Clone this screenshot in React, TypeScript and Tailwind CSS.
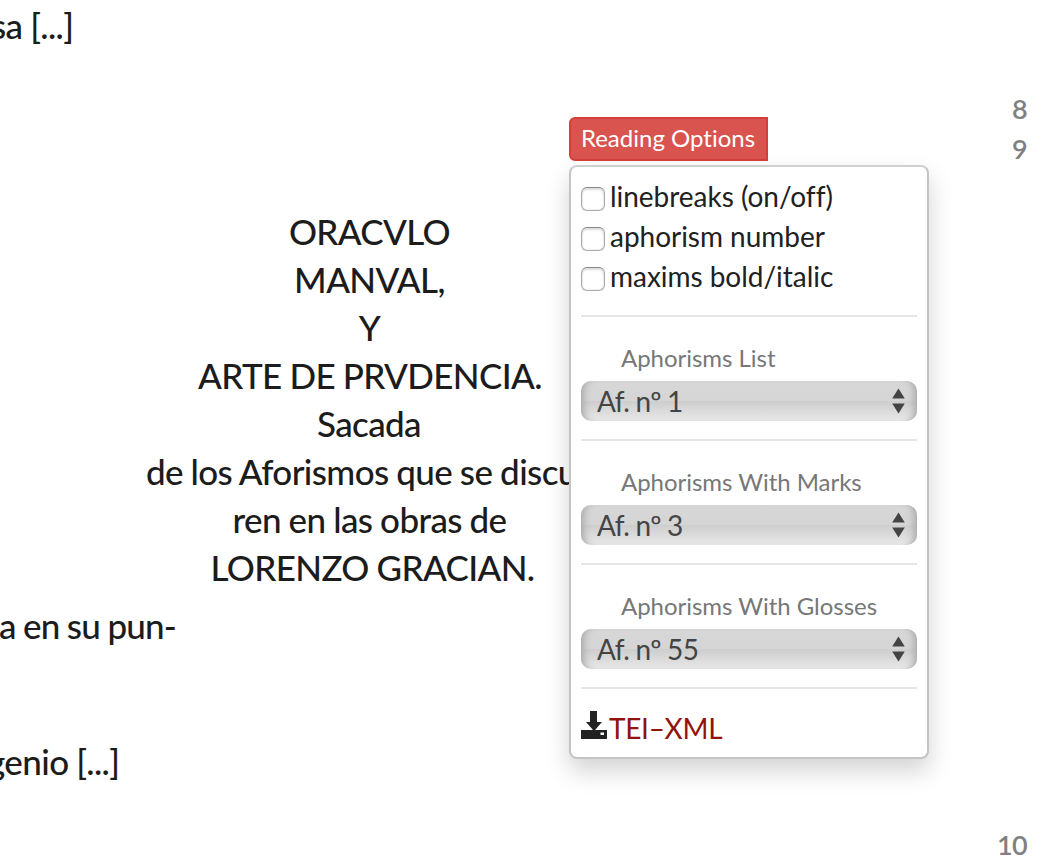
import React from "react";

const titleLines = [
  { text: "ORACVLO", shift: "-ml-px" },
  { text: "MANVAL,", shift: "-ml-px" },
  { text: "Y", shift: "-ml-px" },
  { text: "ARTE DE PRVDENCIA.", shift: "" },
  { text: "Sacada", shift: "-ml-[2px]" },
  { text: "de los Aforismos que se discu-", shift: "-ml-[5px]" },
  { text: "ren en las obras de", shift: "-ml-px" },
  { text: "LORENZO GRACIAN.", shift: "ml-[5px]" },
];

function Check({ label }: { label: string }) {
  return (
    <label className="flex h-10 items-center text-[28px] tracking-[-0.03px] text-[#212121]">
      <span className="mt-1 mr-[5px] size-6 shrink-0 rounded-[6px] border border-[#aaa] border-t-[#888] bg-white shadow-[inset_0_2px_2px_#ddd,inset_0_0_2px_#ccc]" />
      <span className="-mt-[2px] whitespace-nowrap">{label}</span>
    </label>
  );
}

function Picker({ title, value }: { title: string; value: string }) {
  return (
    <section className="h-[124px] border-t-2 border-[#e5e5e5] pt-[22px]">
      <h3 className="h-[42px] pl-10 text-[24px] leading-[38px] tracking-[-0.03px] text-[#777]">{title}</h3>
      <div className="flex h-10 items-center justify-between rounded-[10px] bg-[linear-gradient(#d7d7d7_0%,#d5d5d5_50%,#cecece_51%,#e8e8e8_100%)] pr-3 pl-4 text-[28px] leading-[38px] tracking-[-0.6px] text-[#444] [word-spacing:-0.4px] shadow-[inset_9px_0_7px_-6px_#aaa,inset_-9px_0_7px_-6px_#aaa]">
        <span className="-mt-px">{value}</span>
        <svg width="13" height="26" viewBox="0 0 13 26" fill="#444"><path d="M6.5 0.5 12.8 10.5H.2zM.2 15.5h12.6L6.5 25.5z" /></svg>
      </div>
    </section>
  );
}

export default function App() {
  return (
    <main className="relative h-[862px] w-[1048px] overflow-hidden bg-white font-[Lato,sans-serif] text-[#1c1c1c] [font-variant-ligatures:none]">
      <div className="flex justify-between">
        <div className="w-[740px] text-[35px] leading-[48px] font-medium tracking-[-0.62px] [word-spacing:-0.5px]">
          <p className="-ml-[9px] h-[207px] pt-px">sa [...]</p>
          <div className="text-center">{titleLines.map((l) => <p key={l.text} className={l.shift}>{l.text}</p>)}</div>
          <p className="mt-[10px] -ml-px tracking-[-0.8px] [word-spacing:-0.7px]">a en su pun-</p>
          <p className="mt-[88px] -ml-[13px]">genio [...]</p>
        </div>
        <aside className="w-[60px] pt-[89px] pr-[21px] text-right text-[27px] leading-10 font-semibold tracking-[-0.7px] text-[#808080]">
          <p>8</p><p>9</p><p className="mt-[656px]">10</p>
        </aside>
      </div>
      <div className="absolute top-[117px] left-[569px] w-[360px]">
        <button className="block h-11 w-[199px] rounded-l-[6px] border-2 border-[#d43f3a] bg-[#d9534f] pr-px pb-[2px] text-[24px] leading-[38px] text-white">Reading Options</button>
        <div className="mt-1 h-[594px] rounded-[8px] border-2 border-[#c4c4c4] border-t-[#d0d0d0] bg-white px-[10px] pt-[10px] shadow-[0_12px_24px_rgba(0,0,0,0.175)]">
          <div className="h-[138px]">
            <Check label="linebreaks (on/off)" /><Check label="aphorism number" /><Check label="maxims bold/italic" />
          </div>
          <Picker title="Aphorisms List" value="Af. nº 1" />
          <Picker title="Aphorisms With Marks" value="Af. nº 3" />
          <Picker title="Aphorisms With Glosses" value="Af. nº 55" />
          <div className="flex items-start border-t-2 border-[#e5e5e5] pt-[19px] text-[28px] leading-10 tracking-[-0.3px] text-[#90130c]">
            <svg className="mt-[3px] mr-[2px]" width="26" height="28" viewBox="0 0 26 28" fill="#222"><path d="M9 0h7v11h5l-7 8h12v9H0v-9h12L5 11h4z" /><path d="M19.5 21.5h3.5v2.5h-3.5z" fill="#fff" /></svg>
            TEI–XML
          </div>
        </div>
      </div>
    </main>
  );
}
